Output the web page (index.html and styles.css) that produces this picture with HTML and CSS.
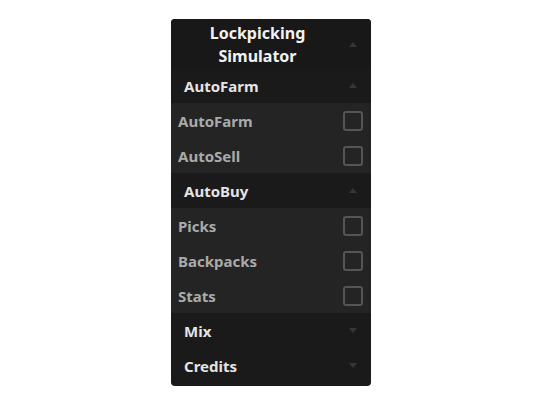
FILE: index.html
```html
<!DOCTYPE html>
<html>
<head>
<meta charset="utf-8">
<link rel="stylesheet" href="styles.css">
</head>
<body>
<div class="panel">
  <div class="title">
    <span class="title-text">Lockpicking<br>Simulator</span>
    <svg class="arrow" viewBox="0 0 8 5"><path d="M0 5 L4 0 L8 5 Z"/></svg>
  </div>
  <div class="section">
    <span>AutoFarm</span>
    <svg class="arrow" viewBox="0 0 8 5"><path d="M0 5 L4 0 L8 5 Z"/></svg>
  </div>
  <div class="row"><span>AutoFarm</span><span class="box"></span></div>
  <div class="row"><span>AutoSell</span><span class="box"></span></div>
  <div class="section">
    <span>AutoBuy</span>
    <svg class="arrow" viewBox="0 0 8 5"><path d="M0 5 L4 0 L8 5 Z"/></svg>
  </div>
  <div class="row"><span>Picks</span><span class="box"></span></div>
  <div class="row"><span>Backpacks</span><span class="box"></span></div>
  <div class="row"><span>Stats</span><span class="box"></span></div>
  <div class="section">
    <span>Mix</span>
    <svg class="arrow" viewBox="0 0 8 5"><path d="M0 0 L8 0 L4 5 Z"/></svg>
  </div>
  <div class="section">
    <span>Credits</span>
    <svg class="arrow" viewBox="0 0 8 5"><path d="M0 0 L8 0 L4 5 Z"/></svg>
  </div>
</div>
</body>
</html>
```
FILE: styles.css
```css
html, body {
  margin: 0;
  background: #ffffff;
}
body {
  font-family: "Noto Sans", "DejaVu Sans", sans-serif;
}
.panel {
  width: 200px;
  margin: 19px 0 0 171px;
  background: #1a1a1a;
  border-radius: 4px;
  overflow: hidden;
  padding-bottom: 3px;
}
.title {
  height: 49px;
  box-sizing: border-box;
  display: flex;
  align-items: center;
  justify-content: center;
  padding: 2px 27px 0 0;
  position: relative;
  background: #181818;
}
.title-text {
  color: #f2f2f2;
  font-weight: 700;
  font-size: 16px;
  line-height: 23px;
  text-align: center;
}
.title .arrow {
  position: absolute;
  right: 14px;
  top: 23px;
}
.arrow {
  width: 8px;
  height: 5px;
  fill: #363636;
}
.section {
  height: 35px;
  display: flex;
  align-items: center;
  justify-content: space-between;
  padding: 0 14px 0 13px;
  background: #1a1a1a;
  color: #e4e4e4;
  font-weight: 700;
  font-size: 15px;
}
.row {
  height: 35px;
  display: flex;
  align-items: center;
  justify-content: space-between;
  padding: 0 8px 0 7px;
  background: #242424;
  color: #aaaaaa;
  font-weight: 700;
  font-size: 15px;
}
.box {
  width: 16px;
  height: 16px;
  border: 2px solid #555555;
  border-radius: 3px;
}
```
